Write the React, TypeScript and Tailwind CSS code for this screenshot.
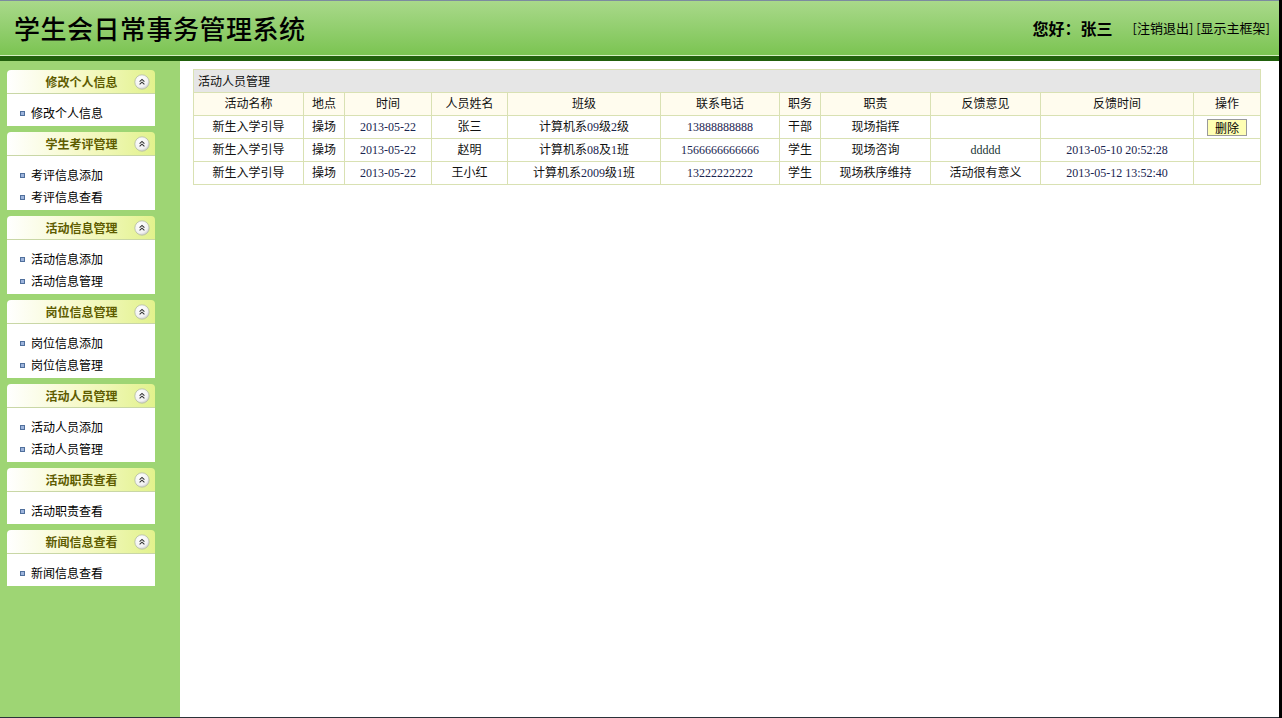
import React from "react";

const cjk = { fontFamily: '"Noto Sans CJK SC", "Liberation Sans", sans-serif' };
const tableFont = { fontFamily: '"Liberation Serif", "Noto Sans CJK SC", serif' };

function Toggle() {
  return (
    <svg width="16" height="16" viewBox="0 0 16 16" className="shrink-0">
      <defs>
        <radialGradient id="tg" cx="40%" cy="35%" r="70%">
          <stop offset="0%" stopColor="#ffffff" />
          <stop offset="70%" stopColor="#f2f2f2" />
          <stop offset="100%" stopColor="#c4c4c4" />
        </radialGradient>
      </defs>
      <circle cx="8" cy="8" r="7.2" fill="url(#tg)" stroke="#b4bca4" strokeWidth="0.8" />
      <path d="M5.6 7.6 L8 5.4 L10.4 7.6" fill="none" stroke="#333" strokeWidth="1.1" />
      <path d="M5.6 10.4 L8 8.2 L10.4 10.4" fill="none" stroke="#333" strokeWidth="1.1" />
    </svg>
  );
}

function Panel({ title, items }: { title: string; items: string[] }) {
  return (
    <div className="w-[148px]">
      <div className="h-[24px] rounded-t-[4px] bg-gradient-to-r from-[#ffffff] via-[#f6f9c8] to-[#e2f28c] border-b border-[#c9d7a6] flex items-center">
        <div className="flex-1 text-center text-[12px] font-bold text-[#5e5c00] pl-[22px]" style={cjk}>
          {title}
        </div>
        <div className="pr-[5px] pt-[1px]">
          <Toggle />
        </div>
      </div>
      <div className="bg-white pt-[8px] pb-[2px]">
        {items.map((it) => (
          <div key={it} className="h-[22px] flex items-center pl-[13px] text-[12px] text-black" style={cjk}>
            <span className="w-[5px] h-[5px] bg-[#9db4dc] border border-[#50709c] mr-[6px] shrink-0" />
            {it}
          </div>
        ))}
      </div>
    </div>
  );
}

const panels = [
  { title: "修改个人信息", items: ["修改个人信息"] },
  { title: "学生考评管理", items: ["考评信息添加", "考评信息查看"] },
  { title: "活动信息管理", items: ["活动信息添加", "活动信息管理"] },
  { title: "岗位信息管理", items: ["岗位信息添加", "岗位信息管理"] },
  { title: "活动人员管理", items: ["活动人员添加", "活动人员管理"] },
  { title: "活动职责查看", items: ["活动职责查看"] },
  { title: "新闻信息查看", items: ["新闻信息查看"] },
];

const cols = [110, 41, 87, 76, 153, 119, 41, 110, 110, 153, 67];
const heads = ["活动名称", "地点", "时间", "人员姓名", "班级", "联系电话", "职务", "职责", "反馈意见", "反馈时间", "操作"];

const N = ({ children }: { children: React.ReactNode }) => <span className="text-[#1a2550]">{children}</span>;

type Row = {
  name: string;
  place: string;
  date: string;
  person: string;
  cls: React.ReactNode;
  phone: string;
  duty: string;
  resp: string;
  fb: React.ReactNode;
  fbt: string;
  del: boolean;
};

const rows: Row[] = [
  {
    name: "新生入学引导",
    place: "操场",
    date: "2013-05-22",
    person: "张三",
    cls: (
      <>
        计算机系<N>09</N>级<N>2</N>级
      </>
    ),
    phone: "13888888888",
    duty: "干部",
    resp: "现场指挥",
    fb: "",
    fbt: "",
    del: true,
  },
  {
    name: "新生入学引导",
    place: "操场",
    date: "2013-05-22",
    person: "赵明",
    cls: (
      <>
        计算机系<N>08</N>及<N>1</N>班
      </>
    ),
    phone: "1566666666666",
    duty: "学生",
    resp: "现场咨询",
    fb: <span className="text-[#1a3434]">ddddd</span>,
    fbt: "2013-05-10 20:52:28",
    del: false,
  },
  {
    name: "新生入学引导",
    place: "操场",
    date: "2013-05-22",
    person: "王小红",
    cls: (
      <>
        计算机系<N>2009</N>级<N>1</N>班
      </>
    ),
    phone: "13222222222",
    duty: "学生",
    resp: "现场秩序维持",
    fb: "活动很有意义",
    fbt: "2013-05-12 13:52:40",
    del: false,
  },
];

const td = "border border-[#d9e1b3] h-[23px] p-0 text-center text-[12px] text-[#111] whitespace-nowrap";

export default function App() {
  return (
    <div className="w-[1282px] h-[718px] flex overflow-hidden bg-black">
      <div className="w-[1279px] h-[718px] flex flex-col">
        <div className="h-[1px] bg-[#7c8ba0]" />
        <div className="h-[54px] bg-gradient-to-b from-[#a9d98a] to-[#7bc451] flex items-center justify-between pl-[14px] pr-[9px]">
          <div className="text-[26px] text-black leading-none tracking-[0.5px]" style={{ fontFamily: '"Noto Sans CJK SC", sans-serif', fontWeight: 500 }}>
            学生会日常事务管理系统
          </div>
          <div className="flex items-center" style={cjk}>
            <span className="text-[16px] font-bold text-black mr-[20px]">您好：张三</span>
            <span className="text-[13px] text-black">[注销退出] [显示主框架]</span>
          </div>
        </div>
        <div className="h-[1px] bg-[#d3edc0]" />
        <div className="h-[5px] bg-[#21600c]" />
        <div className="flex flex-1 min-h-0">
          <div className="w-[180px] shrink-0 bg-[#9ed574] pt-[9px] pl-[7px] flex flex-col gap-[6px]">
            {panels.map((p) => (
              <Panel key={p.title} title={p.title} items={p.items} />
            ))}
          </div>
          <div className="flex-1 bg-white pl-[13px] pt-[8px] flex flex-col items-start">
            <div className="w-[1068px] overflow-hidden">
              <div className="h-[23px] border border-b-0 border-[#d9e1b3] bg-[#e6e6e6] flex items-center pl-[4px] text-[12px] text-[#111]" style={cjk}>
                活动人员管理
              </div>
              <table className="border-collapse w-full" style={tableFont}>
                <tbody>
                  <tr className="bg-[#fffcee]">
                    {heads.map((h, i) => (
                      <td key={h} className={td} style={{ width: cols[i] }}>
                        {h}
                      </td>
                    ))}
                  </tr>
                  {rows.map((r, i) => (
                    <tr key={i}>
                      <td className={td}>{r.name}</td>
                      <td className={td}>{r.place}</td>
                      <td className={td}>
                        <N>{r.date}</N>
                      </td>
                      <td className={td}>{r.person}</td>
                      <td className={td}>{r.cls}</td>
                      <td className={td}>
                        <N>{r.phone}</N>
                      </td>
                      <td className={td}>{r.duty}</td>
                      <td className={td}>{r.resp}</td>
                      <td className={td}>{r.fb}</td>
                      <td className={td}>
                        <N>{r.fbt}</N>
                      </td>
                      <td className={td}>
                        {r.del && (
                          <span className="inline-block align-middle bg-[#ffffb4] border border-[#9a9a9a] px-[7px] h-[17px] leading-[15px] text-[12px] text-black" style={cjk}>
                            删除
                          </span>
                        )}
                      </td>
                    </tr>
                  ))}
                </tbody>
              </table>
            </div>
          </div>
        </div>
        <div className="h-[1px] bg-[#2b323a]" />
      </div>
    </div>
  );
}
